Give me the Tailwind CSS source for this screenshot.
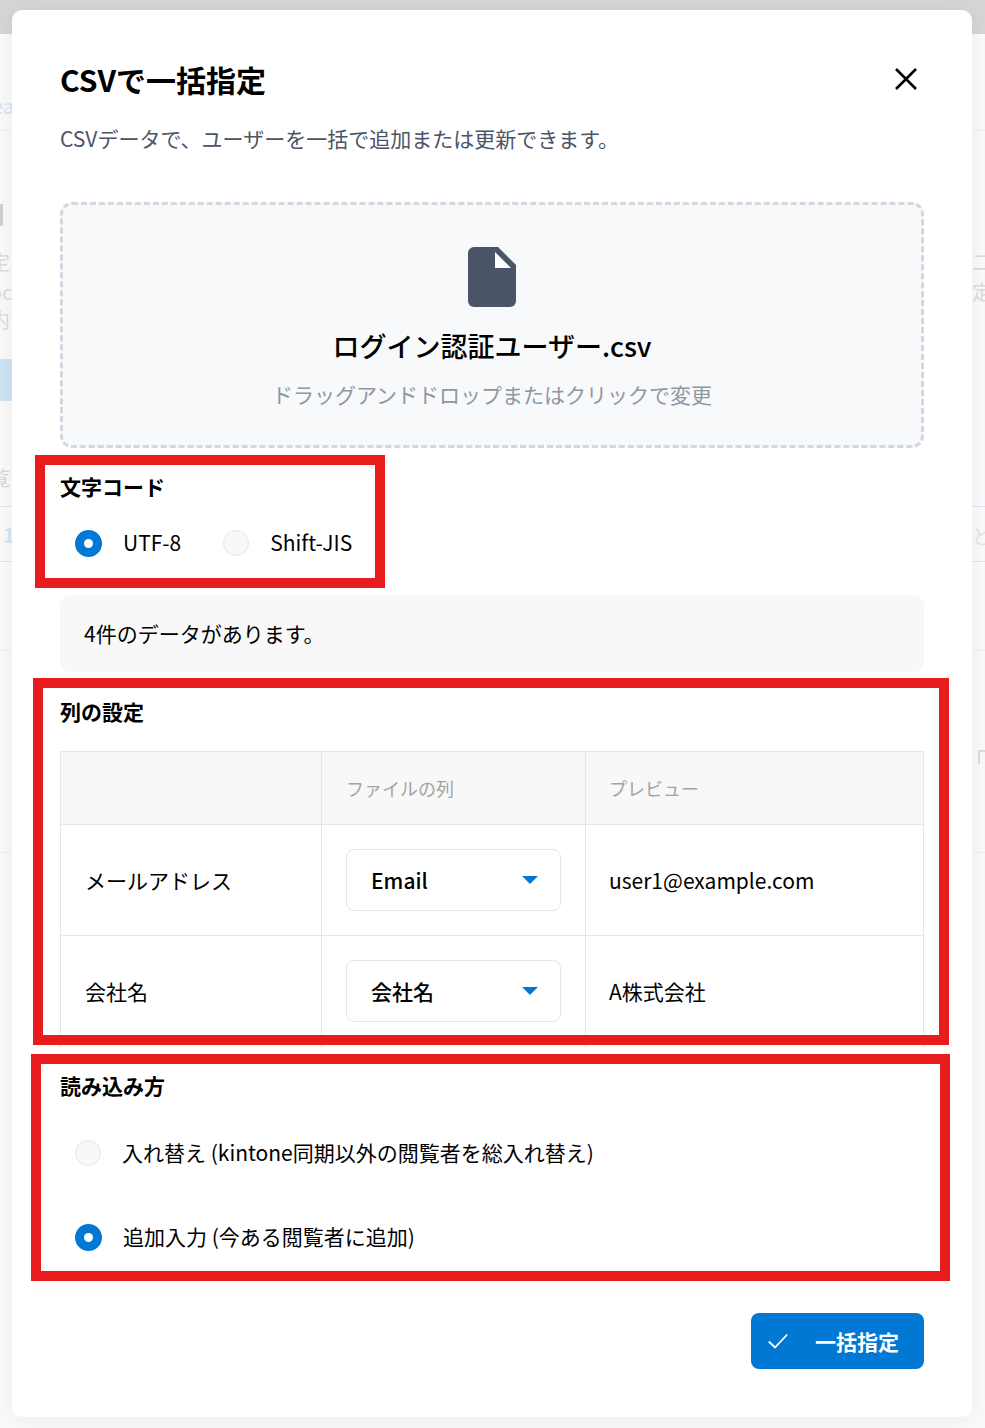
<!doctype html>
<html lang="ja">
<head>
<meta charset="utf-8">
<script src="https://cdn.jsdelivr.net/npm/@tailwindcss/browser@4"></script>
</head>
<body class="m-0">
<div class="relative w-[985px] h-[1428px] overflow-hidden bg-[#fafafa] font-['Noto_Sans_CJK_JP','Noto_Sans',sans-serif] text-black">
  <!-- dimmed page behind the dialog -->
  <div class="absolute inset-x-0 top-0 h-[34px] bg-[#d5d5d5]"></div>
  <div class="absolute left-[-8px] top-[92px] text-[20px] leading-[28px] text-[#d3e6f5]">ea</div>
  <div class="absolute inset-x-0 top-[130px] h-px bg-[#f0f0f0]"></div>
  <div class="absolute left-0 top-[204px] w-[3px] h-[22px] bg-[#d0d0d0]"></div>
  <div class="absolute left-[-10px] top-[248px] text-[20px] leading-[28px] text-[#dcdcdc]">定</div>
  <div class="absolute left-[-10px] top-[278px] text-[20px] leading-[28px] text-[#dcdcdc]">oc</div>
  <div class="absolute left-[-10px] top-[306px] text-[20px] leading-[28px] text-[#e2dcdc]">内</div>
  <div class="absolute left-0 top-[359px] w-[14px] h-[42px] bg-[#cfe2f2]"></div>
  <div class="absolute left-[-10px] top-[464px] text-[20px] leading-[28px] text-[#d6d6d6]">覧</div>
  <div class="absolute inset-x-0 top-[506px] h-px bg-[#d9e8f4]"></div>
  <div class="absolute left-[3px] top-[521px] text-[20px] font-bold leading-[28px] text-[#d3e6f5]">1</div>
  <div class="absolute inset-x-0 top-[561px] h-px bg-[#d9e8f4]"></div>
  <div class="absolute inset-x-0 top-[650px] h-px bg-[#f0f0f0]"></div>
  <div class="absolute inset-x-0 top-[852px] h-px bg-[#f0f0f0]"></div>
  <div class="absolute left-[972px] top-[248px] text-[20px] leading-[28px] text-[#dcdcdc]">二</div>
  <div class="absolute left-[972px] top-[278px] text-[20px] leading-[28px] text-[#dcdcdc]">定</div>
  <div class="absolute left-[972px] top-[522px] text-[20px] leading-[28px] text-[#e6e6e6]">ど</div>
  <div class="absolute left-[978px] top-[750px] w-[7px] h-[14px] border-l-2 border-t-2 border-[#d9dde6]"></div>

  <!-- dialog -->
  <div class="absolute left-[12px] top-[10px] w-[960px] h-[1407px] rounded-[10px] bg-white px-12 pt-[46px] shadow-[0_4px_24px_rgba(0,0,0,0.06)]">
    <div class="flex items-center justify-between h-[46px]">
      <h2 class="text-[30px] font-bold leading-[46px]">CSVで一括指定</h2>
      <svg class="mr-[6px]" width="24" height="24" viewBox="0 0 24 24" fill="none" stroke="black" stroke-width="2.6"><path d="M2 2 L22 22 M22 2 L2 22"/></svg>
    </div>
    <p class="mt-[21px] text-[21px] leading-[30px] text-[#4a5568]">CSVデータで、ユーザーを一括で追加または更新できます。</p>

    <div class="mt-[49px] h-[246px] rounded-[12px] border-[3px] border-dashed border-[#d3d8e0] bg-[#f8f9fb] flex flex-col items-center pt-[42px]">
      <svg width="48" height="60" viewBox="0 0 48 60"><path d="M6 0 H30 L48 18 V54 A6 6 0 0 1 42 60 H6 A6 6 0 0 1 0 54 V6 A6 6 0 0 1 6 0 Z" fill="#4a5568"/><path d="M27 5 V21 H43 Z" fill="white"/></svg>
      <div class="mt-[17px] text-[27px] font-medium leading-[44px]">ログイン認証ユーザー.csv</div>
      <div class="mt-[11px] text-[21px] leading-[30px] text-[#8f97a3]">ドラッグアンドドロップまたはクリックで変更</div>
    </div>

    <div class="mt-[23px] text-[21px] font-bold leading-[30px]">文字コード</div>
    <div class="mt-[27px] flex items-center h-[30px] text-[21px]">
      <span class="ml-[15px] w-[27px] h-[27px] rounded-full bg-[#0078d4] flex items-center justify-center"><span class="w-[9px] h-[9px] rounded-full bg-white"></span></span>
      <span class="ml-[21px]">UTF-8</span>
      <span class="ml-[42px] w-[26px] h-[26px] rounded-full bg-[#f8f8f8] border border-[#e6e6e6]"></span>
      <span class="ml-[21px]">Shift-JIS</span>
    </div>

    <div class="mt-[37px] h-[77px] rounded-[10px] bg-[#f8f8f8] px-6 flex items-center text-[21px]">4件のデータがあります。</div>

    <div class="mt-[24px] text-[21px] font-bold leading-[30px]">列の設定</div>
    <div class="mt-[25px] h-[296px] border border-[#e6e6e6] border-b-0 grid grid-cols-[261px_264px_1fr] grid-rows-[73px_111px_111px] text-[21px]">
      <div class="bg-[#f8f8f8] border-r border-b border-[#e6e6e6]"></div>
      <div class="bg-[#f8f8f8] border-r border-b border-[#e6e6e6] pl-[24px] flex items-center text-[18px] text-[#a3a3a3]">ファイルの列</div>
      <div class="bg-[#f8f8f8] border-b border-[#e6e6e6] pl-[23px] flex items-center text-[18px] text-[#a3a3a3]">プレビュー</div>

      <div class="border-r border-b border-[#e6e6e6] pl-[24px] pt-[2px] flex items-center">メールアドレス</div>
      <div class="border-r border-b border-[#e6e6e6] pl-[24px] flex items-center">
        <div class="w-[215px] h-[62px] rounded-[8px] border border-[#e6e6e6] pl-[24px] pr-[22px] flex items-center justify-between font-medium"><span class="pt-[2px]">Email</span><svg width="16" height="8" viewBox="0 0 16 8"><path d="M0 0 H16 L8 8 Z" fill="#0078d4"/></svg></div>
      </div>
      <div class="border-b border-[#e6e6e6] pl-[23px] pt-[2px] flex items-center">user1@example.com</div>

      <div class="border-r border-[#e6e6e6] pl-[24px] flex items-center">会社名</div>
      <div class="border-r border-[#e6e6e6] pl-[24px] flex items-center">
        <div class="mt-[-2px] w-[215px] h-[62px] rounded-[8px] border border-[#e6e6e6] pl-[24px] pr-[22px] flex items-center justify-between font-medium"><span class="pt-[2px]">会社名</span><svg width="16" height="8" viewBox="0 0 16 8"><path d="M0 0 H16 L8 8 Z" fill="#0078d4"/></svg></div>
      </div>
      <div class="pl-[23px] flex items-center">A株式会社</div>
    </div>

    <div class="mt-[23px] text-[21px] font-bold leading-[30px]">読み込み方</div>
    <div class="mt-[38px] flex items-center h-[30px] text-[21px]">
      <span class="ml-[15px] w-[26px] h-[26px] rounded-full bg-[#f8f8f8] border border-[#e6e6e6]"></span>
      <span class="ml-[21px]">入れ替え (kintone同期以外の閲覧者を総入れ替え)</span>
    </div>
    <div class="mt-[54px] flex items-center h-[30px] text-[21px]">
      <span class="ml-[15px] w-[27px] h-[27px] rounded-full bg-[#0078d4] flex items-center justify-center"><span class="w-[9px] h-[9px] rounded-full bg-white"></span></span>
      <span class="ml-[21px]">追加入力 (今ある閲覧者に追加)</span>
    </div>

    <div class="mt-[61px] flex justify-end">
      <div class="w-[173px] h-[56px] rounded-[8px] bg-[#0078d4] text-white flex items-center pl-[17px]">
        <svg width="20" height="16" viewBox="0 0 20 16" fill="none" stroke="white" stroke-width="1.8"><path d="M0.8 8.5 L7 14.5 L19.2 1.5"/></svg>
        <span class="ml-[27px] text-[21px] font-bold leading-[30px]">一括指定</span>
      </div>
    </div>
  </div>

  <!-- red annotation frames -->
  <div class="absolute left-[35px] top-[455px] w-[350px] h-[133px] border-[10px] border-[#e81c1c]"></div>
  <div class="absolute left-[33px] top-[678px] w-[916px] h-[367px] border-[10px] border-[#e81c1c]"></div>
  <div class="absolute left-[31px] top-[1054px] w-[919px] h-[227px] border-[10px] border-[#e81c1c]"></div>
</div>
</body>
</html>
